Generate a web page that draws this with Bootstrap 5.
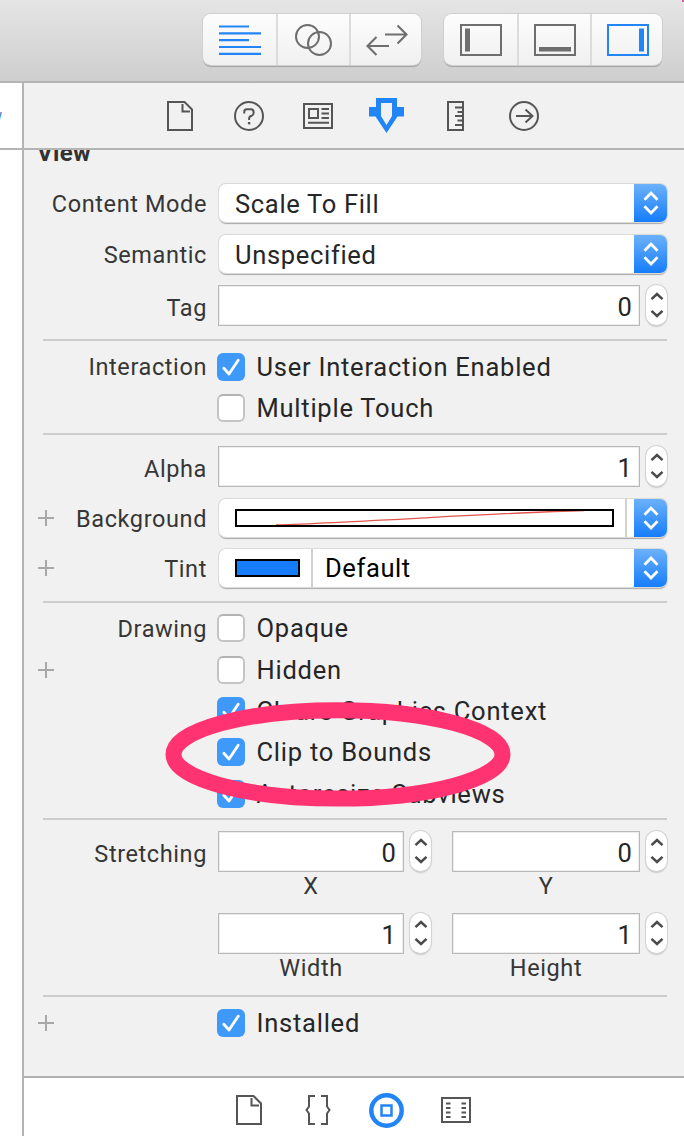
<!DOCTYPE html>
<html lang="en">
<head>
<meta charset="utf-8">
<meta name="viewport" content="width=device-width, initial-scale=1">
<title>Attributes Inspector</title>
<link href="https://cdn.jsdelivr.net/npm/bootstrap@5.3.0/dist/css/bootstrap.min.css" rel="stylesheet">
<style>
  body { font-family: Roboto, "Liberation Sans", sans-serif; font-size: 25.5px; line-height: 30px; color: #262626; background: #f1f1f1; letter-spacing: .6px; }
  svg { display: block; flex: none; overflow: visible; }
  .window { width: 684px; height: 1136px; }
  .toolbar { height: 83px; padding: 14px 22px 0 0; gap: 23px; background: linear-gradient(#e5e5e5, #cecece); border-bottom: 2px solid #b4b4b4; }
  .corner { width: 2px; height: 2px; background: #e0559f; }
  .seg { width: 218px; height: 51px; border-radius: 8px; background: linear-gradient(#fdfdfd, #f0f0f0); box-shadow: 0 0 0 1px #cfcfcf, 0 1.5px 1px #a2a2a2; }
  .seg > button { width: 73px; padding: 0; border: 0; background: none; color: #6e6e6e; display: flex; align-items: center; justify-content: center; }
  .seg > button + button { border-left: 2px solid #dcdcdc; }
  .seg > button:last-child { width: 72px; padding-left: 1px; }
  .seg > .on, .tabs .on { color: #2285f7; }
  .editor { width: 24px; border-right: 2px solid #b4b4b4; background: #fff; }
  .editor .crumb { height: 67px; border-bottom: 2px solid #b4b4b4; color: #2f74c9; font-size: 14px; line-height: 64px; }
  .editor .crumb span { display: flex; justify-content: flex-end; width: 2px; letter-spacing: 0; overflow: hidden; }
  .tabs { color: #555; }
  .tabs > span { width: 68.9px; display: flex; justify-content: center; align-items: center; }
  .tabs-top { height: 67px; padding-left: 121.5px; border-bottom: 2px solid #b4b4b4; }
  .tabs-bottom { height: 60px; padding: 6px 0 0 190.5px; border-top: 2px solid #b0b0b0; background: #fff; }
  .inspector { padding: 0 16px 0 14px; }
  .heading { height: 34px; font-size: 24px; font-weight: 700; line-height: 30px; color: #333; letter-spacing: .3px; }
  .heading span { position: relative; top: -12px; left: -1px; }
  .prop { display: grid; grid-template-columns: 12px 157px 450px; align-items: center; }
  .prop > .name { text-align: right; font-size: 23.5px; color: #363636; white-space: nowrap; padding-top: 1px; }
  .prop > .ctl { margin-left: 11px; width: 449px; }
  .plus { color: #a8a8a8; }
  .rule { height: 2px; margin: 0 1.5px 0 4.5px; background: #cdcdcd; }
  .prop > .popup { width: 448px; height: 38px; margin-left: 12px; background: #fff; border-radius: 7px; box-shadow: 0 0 0 1px #dadada, 0 1.5px 1px #a9a9a9; overflow: hidden; }
  .popup .cap { width: 33px; background: linear-gradient(#6bb1fa, #167dfb); display: flex; align-items: center; justify-content: center; }
  .popup .txt { padding: 5px 0 0 16px; letter-spacing: .68px; }
  .popup .well { margin-left: 15px; }
  .split { border-left: 2px solid #d2d2d2; }
  .field { height: 41px; background: #fff; border: 1px solid #b9b9b9; box-shadow: inset 0 0 0 1px #ececec; text-align: right; padding: 0 6.5px 0 0; line-height: 42px; }
  .field-wide { width: 422px; }
  .step { width: 21px; height: 40px; border-radius: 11px; background: #fff; box-shadow: 0 0 0 1px #d3d3d3, 0 1.5px 1.5px #aaa; display: flex; align-items: center; justify-content: center; }
  .check { height: 41.3px; margin-left: -1px; letter-spacing: .76px; }
  .box { width: 28px; height: 28px; border-radius: 6px; margin-right: 11.5px; background: #fff; border: 2px solid #c4c4c4; border-top-color: #b3b3b3; }
  .box.checked { border: 0; background: #3e99fa; }
  .sub { font-size: 23.5px; color: #363636; text-align: center; height: 41px; line-height: 29px; }
  .pair { display: grid; grid-template-columns: 186px 27px 21px 188px 27px; }
  .pair .step { justify-self: end; }
  .ring { left: 140px; top: 618px; pointer-events: none; }
</style>
</head>
<body>
<svg width="0" height="0" class="position-absolute">
  <defs>
    <symbol id="updown" viewBox="0 0 16 24"><path d="M1.500 8.800 8 2l6.500 6.800M1.500 15.200 8 22l6.500-6.800" fill="none" stroke="#fff" stroke-width="2.700"/></symbol>
    <symbol id="stepper" viewBox="0 0 14 26"><path d="M1.500 7.200 7 2l5.500 5.200M1.500 18.800 7 24l5.500-5.200" fill="none" stroke="#4a4a4a" stroke-width="2.500"/></symbol>
    <symbol id="tick" viewBox="0 0 28 28"><path d="M6.800 15.300 12 21 21.200 7.200" fill="none" stroke="#fff" stroke-width="2.800" stroke-linecap="round" stroke-linejoin="round"/></symbol>
    <symbol id="add" viewBox="0 0 16 16"><path d="M8 0v16M0 8h16" stroke="currentColor" stroke-width="2"/></symbol>
    <symbol id="doc" viewBox="0 0 26 30"><path d="M1 1h16.500L25 8.500V29H1ZM15.500 3v7.500H23" fill="none" stroke="currentColor" stroke-width="2"/></symbol>
  </defs>
</svg>
<div class="window d-flex flex-column overflow-hidden position-relative">
  <div class="corner position-absolute top-0 end-0"></div>
  <header class="toolbar d-flex justify-content-end flex-shrink-0">
    <div class="seg d-flex">
      <button class="on" aria-label="Standard editor"><svg width="42" height="30"><path d="M0 1.500h30M0 8.400h42M0 15.200h30M0 22h42M0 28.800h42" stroke="currentColor" stroke-width="2.200"/></svg></button>
      <button aria-label="Assistant editor"><svg width="37" height="32" fill="none" stroke="currentColor" stroke-width="2"><circle cx="12.500" cy="12.500" r="11.500"/><circle cx="24.500" cy="19.500" r="11.500"/></svg></button>
      <button aria-label="Version editor"><svg width="42" height="30" fill="none" stroke="currentColor" stroke-width="2.100"><path d="M19 9.500h22M31.500.500l9 9-9 9M23 21H1M10.500 12l-9 9 9 9"/></svg></button>
    </div>
    <div class="seg d-flex">
      <button aria-label="Navigator"><svg width="42" height="32"><path d="M1 1h40v30H1Z" fill="none" stroke="currentColor" stroke-width="2"/><path d="M5 4.500h5v23H5Z" fill="currentColor"/></svg></button>
      <button aria-label="Debug area"><svg width="42" height="32"><path d="M1 1h40v30H1Z" fill="none" stroke="currentColor" stroke-width="2"/><path d="M5 23h32v4.500H5Z" fill="currentColor"/></svg></button>
      <button class="on" aria-label="Utilities"><svg width="42" height="32"><path d="M1 1h40v30H1Z" fill="none" stroke="currentColor" stroke-width="2"/><path d="M32 4.500h5v23h-5Z" fill="currentColor"/></svg></button>
    </div>
  </header>

  <div class="d-flex flex-grow-1">
    <aside class="editor flex-shrink-0"><div class="crumb"><span>w</span></div></aside>
    <main class="flex-grow-1 d-flex flex-column position-relative">
      <nav class="tabs tabs-top d-flex flex-shrink-0">
        <span><svg width="26" height="30"><use href="#doc"/></svg></span>
        <span><svg width="30" height="30" fill="none" stroke="currentColor" stroke-width="2"><circle cx="15" cy="15" r="14"/><path d="M10.200 12.500V11q0-2.700 2.700-2.700h4q2.700 0 2.700 2.700v1q0 2-2 2.800-2.500.800-2.500 2.700v1.500"/><path d="M15.100 21v2.300" stroke-width="2.400"/></svg></span>
        <span><svg width="30" height="26" fill="none" stroke="currentColor" stroke-width="2"><path d="M1 1h28v24H1ZM6 6h9v9H6ZM18.500 6H26M18.500 10.500H26M18.500 15H26M5 19.700h21"/></svg></span>
        <span class="on"><svg width="35" height="35"><path fill="currentColor" fill-rule="evenodd" d="M7 0h21v9h7v9.500h-6.500L17.500 35 6.500 18.500H0V9h7ZM12 5v13l5.500 9 5.500-9V5Z"/></svg></span>
        <span><svg width="17" height="30" fill="none" stroke="currentColor" stroke-width="2"><path d="M1 1h15v28H1ZM8 6.500h8M10.500 11h5.500M8 15h8M10.500 19.500h5.500M8 24h8"/></svg></span>
        <span><svg width="30" height="30" fill="none" stroke="currentColor" stroke-width="2"><circle cx="15" cy="15" r="14"/><path d="M7 15h16.500M16.500 8.500l7 6.500-7 6.500"/></svg></span>
      </nav>

      <section class="inspector flex-grow-1 overflow-hidden">
        <div class="heading"><span>View</span></div>

        <div class="prop"><i></i><span class="name">Content Mode</span>
          <div class="ctl popup d-flex"><span class="txt flex-grow-1">Scale To Fill</span><span class="cap"><svg width="16" height="24"><use href="#updown"/></svg></span></div></div>
        <div class="prop" style="margin-top:13px"><i></i><span class="name">Semantic</span>
          <div class="ctl popup d-flex"><span class="txt flex-grow-1">Unspecified</span><span class="cap"><svg width="16" height="24"><use href="#updown"/></svg></span></div></div>
        <div class="prop" style="margin-top:12px"><i></i><span class="name pt-1">Tag</span>
          <div class="ctl d-flex justify-content-between"><div class="field field-wide">0</div><span class="step"><svg width="14" height="26"><use href="#stepper"/></svg></span></div></div>

        <div class="rule" style="margin-top:13px;margin-bottom:10px"></div>
        <div class="prop"><i></i><span class="name">Interaction</span>
          <div class="ctl"><div class="check d-flex align-items-center" style="height:27px"><span class="box checked"><svg width="28" height="28"><use href="#tick"/></svg></span>User Interaction Enabled</div></div></div>
        <div class="prop" style="margin-top:5px"><i></i><i></i><div class="ctl"><div class="check d-flex align-items-center"><span class="box"></span>Multiple Touch</div></div></div>

        <div class="rule" style="margin-top:5px;margin-bottom:11px"></div>
        <div class="prop"><i></i><span class="name pt-1">Alpha</span>
          <div class="ctl d-flex justify-content-between"><div class="field field-wide">1</div><span class="step"><svg width="14" height="26"><use href="#stepper"/></svg></span></div></div>
        <div class="prop" style="margin-top:12px"><svg class="plus" width="16" height="16"><use href="#add"/></svg><span class="name">Background</span>
          <div class="ctl popup d-flex align-items-stretch">
            <svg class="well align-self-center" width="381" height="20"><path d="M42 17C130 14 280 4 350 2.500" fill="none" stroke="#e0554c" stroke-width="1.300"/><path d="M2 2h377v16H2Z" fill="none" stroke="#000" stroke-width="2"/></svg>
            <span class="ms-auto split" style="width:9px"></span><span class="cap"><svg width="16" height="24"><use href="#updown"/></svg></span></div></div>
        <div class="prop" style="margin-top:12px"><svg class="plus" width="16" height="16"><use href="#add"/></svg><span class="name">Tint</span>
          <div class="ctl popup d-flex align-items-stretch">
            <svg class="well align-self-center" width="77" height="20"><path d="M2 2h63v16H2Z" fill="#167efb" stroke="#000" stroke-width="2"/></svg>
            <span class="split flex-grow-1 ps-2 pt-1 text-black"><span class="ms-1">Default</span></span><span class="cap"><svg width="16" height="24"><use href="#updown"/></svg></span></div></div>

        <div class="rule" style="margin-top:13.500px;margin-bottom:5px"></div>
        <div class="prop"><i></i><span class="name">Drawing</span><div class="ctl"><div class="check d-flex align-items-center"><span class="box"></span>Opaque</div></div></div>
        <div class="prop"><svg class="plus" width="16" height="16"><use href="#add"/></svg><i></i><div class="ctl"><div class="check d-flex align-items-center"><span class="box"></span>Hidden</div></div></div>
        <div class="prop"><i></i><i></i><div class="ctl"><div class="check d-flex align-items-center"><span class="box checked"><svg width="28" height="28"><use href="#tick"/></svg></span>Clears Graphics Context</div></div></div>
        <div class="prop"><i></i><i></i><div class="ctl"><div class="check d-flex align-items-center"><span class="box checked"><svg width="28" height="28"><use href="#tick"/></svg></span>Clip to Bounds</div></div></div>
        <div class="prop"><i></i><i></i><div class="ctl"><div class="check d-flex align-items-center"><span class="box checked"><svg width="28" height="28"><use href="#tick"/></svg></span>Autoresize Subviews</div></div></div>

        <div class="rule" style="margin-top:4px;margin-bottom:11px"></div>
        <div class="prop align-items-start"><i></i><span class="name pt-2">Stretching</span>
          <div class="ctl pair">
            <div class="field">0</div><span class="step"><svg width="14" height="26"><use href="#stepper"/></svg></span><i></i>
            <div class="field">0</div><span class="step"><svg width="14" height="26"><use href="#stepper"/></svg></span>
            <div class="sub">X</div><i></i><i></i><div class="sub">Y</div><i></i>
            <div class="field">1</div><span class="step"><svg width="14" height="26"><use href="#stepper"/></svg></span><i></i>
            <div class="field">1</div><span class="step"><svg width="14" height="26"><use href="#stepper"/></svg></span>
            <div class="sub">Width</div><i></i><i></i><div class="sub">Height</div><i></i>
          </div></div>

        <div class="rule" style="margin-top:0;margin-bottom:5px"></div>
        <div class="prop"><svg class="plus" width="16" height="16"><use href="#add"/></svg><i></i><div class="ctl"><div class="check d-flex align-items-center"><span class="box checked"><svg width="28" height="28"><use href="#tick"/></svg></span>Installed</div></div></div>
      </section>

      <nav class="tabs tabs-bottom d-flex flex-shrink-0">
        <span><svg width="26" height="30"><use href="#doc"/></svg></span>
        <span><svg width="26" height="30" fill="none" stroke="currentColor" stroke-width="2"><path d="M10 1H4v10.500L1.500 15 4 18.500V29h6M16 1h6v10.500l2.500 3.500-2.500 3.500V29h-6"/></svg></span>
        <span class="on"><svg width="35" height="35" fill="none" stroke="currentColor"><circle cx="17.500" cy="17.500" r="15.200" stroke-width="4.500"/><path d="M12.500 12.500h10v10h-10Z" stroke-width="2.500"/></svg></span>
        <span><svg width="30" height="26" fill="none" stroke="currentColor" stroke-width="2"><path d="M1 1h28v24H1Z"/><path d="M5 6.500h4.500M5 11h4.500M5 15.500h4.500M5 20h4.500M20.500 6.500H25M20.500 11H25M20.500 15.500H25M20.500 20H25"/></svg></span>
      </nav>
      <svg class="ring position-absolute" width="348" height="106"><ellipse cx="174" cy="53.400" rx="164.500" ry="44.200" fill="none" stroke="#ff3371" stroke-width="16"/></svg>
    </main>
  </div>
</div>
<script src="https://cdn.jsdelivr.net/npm/bootstrap@5.3.0/dist/js/bootstrap.bundle.min.js"></script>
</body>
</html>
